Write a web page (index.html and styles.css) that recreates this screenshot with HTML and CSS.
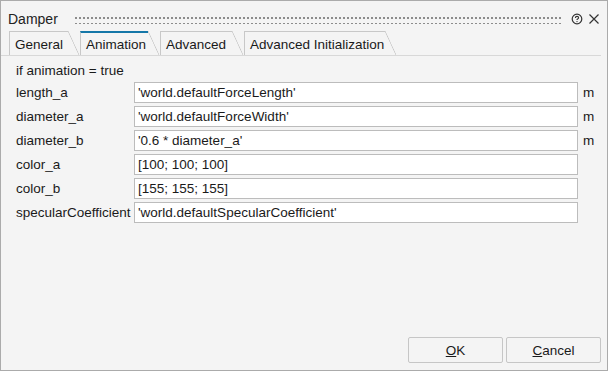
FILE: index.html
```html
<!DOCTYPE html>
<html>
<head>
    <title>Damper</title>
    <link rel="stylesheet" href="styles.css">
</head>
<body>
    <div class="window">
        <div class="titlebar">
            <span class="title">Damper</span>
            <div class="grip"></div>
            <svg class="help" width="12" height="12" viewBox="0 0 12 12">
                <circle cx="6" cy="6" r="4.8" fill="none" stroke="#333" stroke-width="1.2"/>
                <path d="M4.4 5 Q4.4 3.4 6 3.4 Q7.6 3.4 7.6 4.8 Q7.6 5.6 6.6 6 Q6 6.3 6 7.1" fill="none" stroke="#333" stroke-width="1.1"/>
                <circle cx="6" cy="8.6" r="0.7" fill="#333"/>
            </svg>
            <svg class="close" width="12" height="12" viewBox="0 0 12 12">
                <path d="M1.5 1.5 L10.5 10.5 M10.5 1.5 L1.5 10.5" stroke="#333" stroke-width="1.2"/>
            </svg>
        </div>

        <div class="tabs">
            <div class="tab">General</div>
            <div class="tab active">Animation</div>
            <div class="tab">Advanced</div>
            <div class="tab">Advanced Initialization</div>
        </div>

        <div class="content">
            <div class="cond">if animation = true</div>
            <div class="row">
                <label>length_a</label>
                <div class="field">'world.defaultForceLength'</div>
                <span class="unit">m</span>
            </div>
            <div class="row">
                <label>diameter_a</label>
                <div class="field">'world.defaultForceWidth'</div>
                <span class="unit">m</span>
            </div>
            <div class="row">
                <label>diameter_b</label>
                <div class="field">'0.6 * diameter_a'</div>
                <span class="unit">m</span>
            </div>
            <div class="row">
                <label>color_a</label>
                <div class="field">[100; 100; 100]</div>
                <span class="unit"></span>
            </div>
            <div class="row">
                <label>color_b</label>
                <div class="field">[155; 155; 155]</div>
                <span class="unit"></span>
            </div>
            <div class="row">
                <label>specularCoefficient</label>
                <div class="field">'world.defaultSpecularCoefficient'</div>
                <span class="unit"></span>
            </div>
        </div>

        <div class="buttons">
            <button><u>O</u>K</button>
            <button><u>C</u>ancel</button>
        </div>
    </div>
</body>
</html>
```

FILE: styles.css
```css
html, body {
    margin: 0;
    padding: 0;
}
body {
    font-family: "Liberation Sans", Arial, sans-serif;
    font-size: 13.5px;
    color: #1a1a1a;
    background-color: #f4f4f4;
}
.window {
    width: 608px;
    height: 371px;
    box-sizing: border-box;
    border: 1px solid #ababab;
    background-color: #f4f4f4;
    display: flex;
    flex-direction: column;
}
.titlebar {
    height: 29px;
    display: flex;
    align-items: center;
    padding: 0 7px 0 7px;
}
.title {
    font-size: 14px;
    color: #222;
    margin-top: 7px;
}
.grip {
    flex: 1;
    height: 9px;
    margin: 7px 10px 0 16px;
    background-image: radial-gradient(circle, #8c8c8c 1px, transparent 1.3px);
    background-size: 4px 6px;
    background-position: 0 0;
}
.help {
    margin-top: 7px;
    margin-right: 5px;
}
.close {
    margin-top: 7px;
}
.tabs {
    display: flex;
    margin: 1px 6px 0 0;
    padding-left: 8px;
    height: 24px;
    border-bottom: 1px solid #d8d8d8;
}
.tab {
    position: relative;
    box-sizing: border-box;
    height: 24px;
    padding: 5px 0 0 5px;
    border-top: 1px solid #c8c8c8;
    border-left: 1px solid #c8c8c8;
    margin-right: 12px;
    color: #1a1a1a;
}
.tab::after {
    content: '';
    position: absolute;
    top: -1px;
    bottom: 0;
    right: -11px;
    width: 11px;
    background: linear-gradient(to top right, transparent calc(50% - 0.7px), #c8c8c8, transparent calc(50% + 0.7px));
}
.tab:nth-child(1) { width: 59px; }
.tab:nth-child(2) { width: 68px; }
.tab:nth-child(3) { width: 72px; }
.tab:nth-child(4) { width: 141px; }
.tab.active {
    border-top: 2px solid #1577a8;
    padding-top: 4px;
    background-color: #f4f4f4;
}
.tab.active::after {
    top: -2px;
}
.content {
    flex: 1;
    padding: 7px 0 0 15px;
    display: flex;
    flex-direction: column;
    gap: 4px;
}
.cond {
    height: 15px;
    line-height: 15px;
}
.row {
    display: flex;
    align-items: center;
    height: 20px;
}
.row label {
    width: 118px;
}
.field {
    box-sizing: border-box;
    width: 444px;
    height: 21px;
    line-height: 19px;
    padding-left: 3px;
    border: 1px solid #bcbcbc;
    background-color: #ffffff;
    white-space: nowrap;
    overflow: hidden;
}
.unit {
    margin-left: 5px;
}
.buttons {
    display: flex;
    justify-content: flex-end;
    gap: 3px;
    padding: 0 6px 7px 0;
}
.buttons button {
    width: 95px;
    height: 26px;
    font-family: "Liberation Sans", Arial, sans-serif;
    font-size: 13.5px;
    color: #1a1a1a;
    background-color: #f4f4f4;
    border: 1px solid #c6c6c6;
    border-radius: 2px;
}
```
